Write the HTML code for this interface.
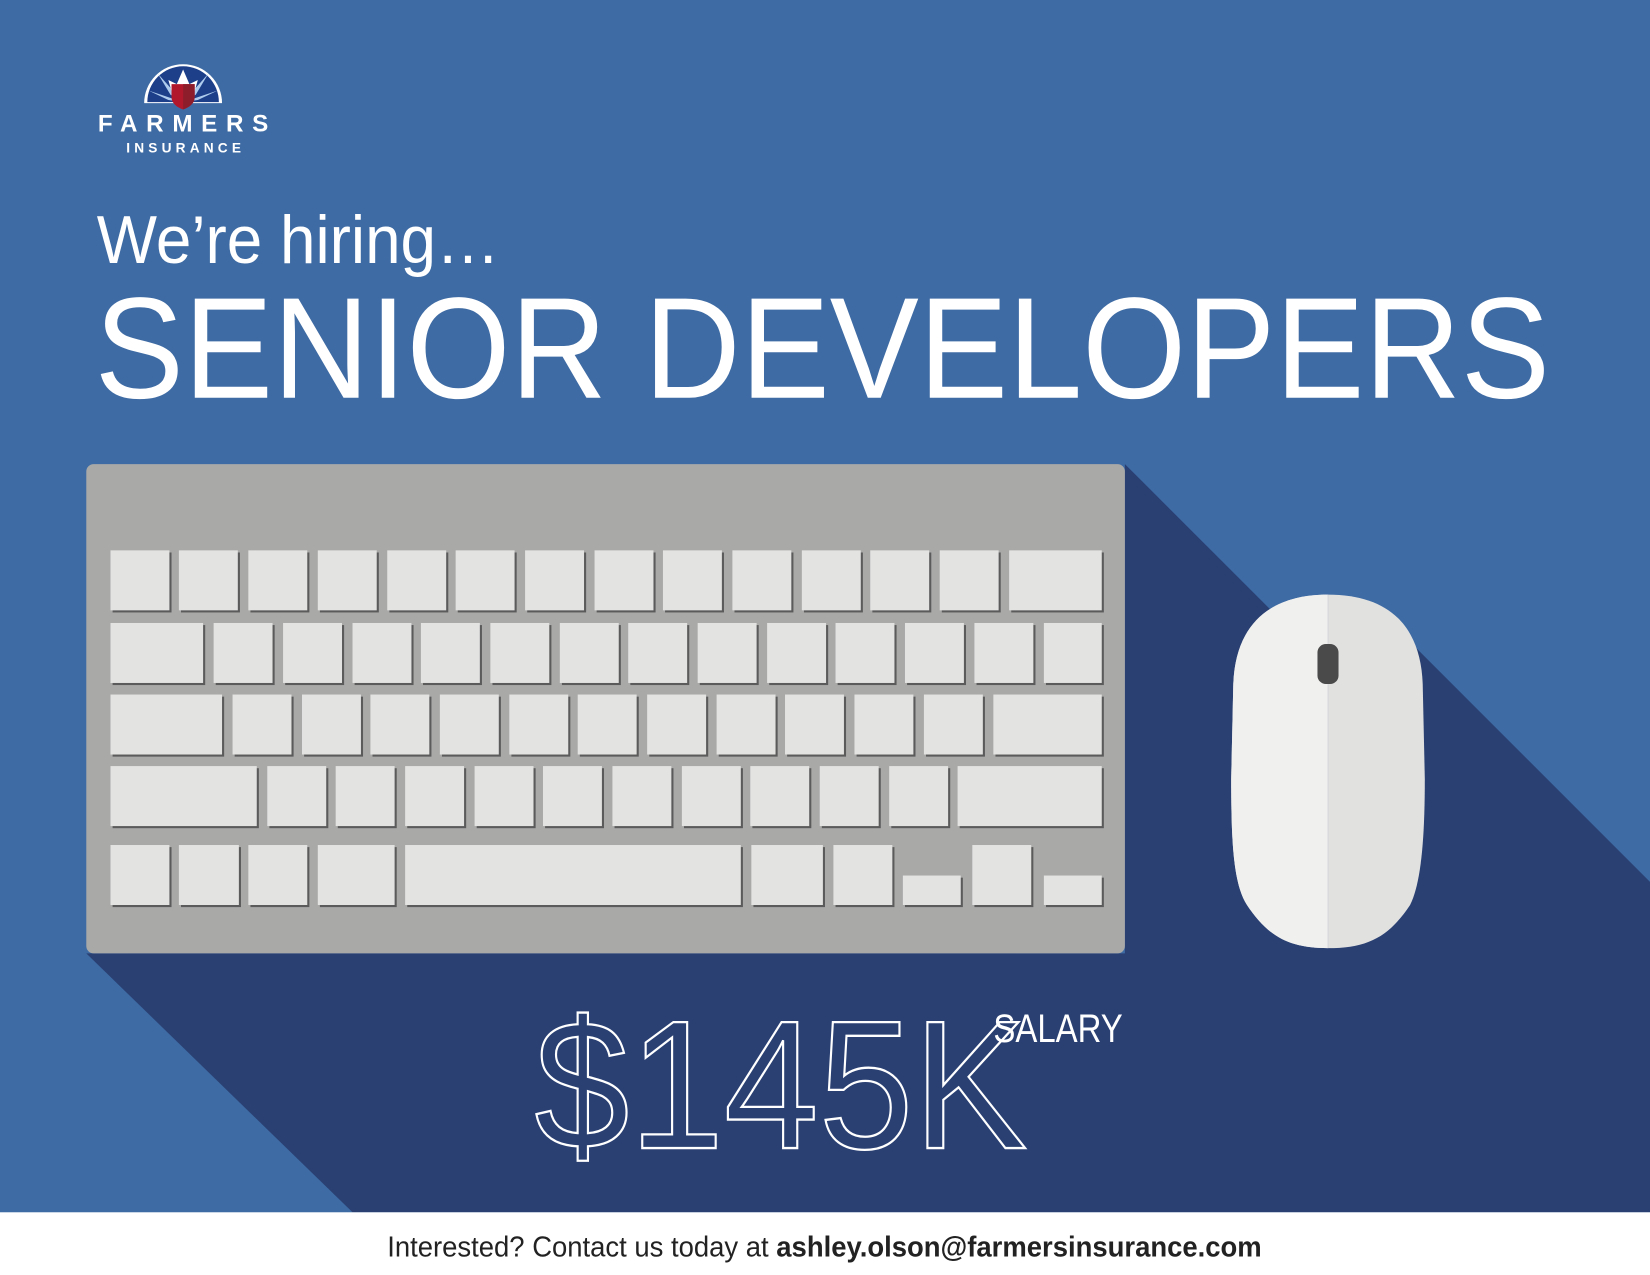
<!DOCTYPE html>
<html><head><meta charset="utf-8"><style>html,body{margin:0;padding:0;width:1650px;height:1275px;overflow:hidden;background:#3e6ba4}svg{display:block}</style></head>
<body>
<svg width="1650" height="1275" viewBox="0 0 1568 1211.6" preserveAspectRatio="none" xmlns="http://www.w3.org/2000/svg" font-family="Liberation Sans, sans-serif">
<rect width="1568" height="1212" fill="#3e6ba4"/>
<polygon points="1069,441 1215,587 1320,590 1568,838 1568,1152 335,1152 82,906 1069,906" fill="#2a4073"/>
<rect x="0" y="1152" width="1568" height="60" fill="#fff"/>
<!-- logo -->
<path d="M137,98 A37,37 0 0 1 211,98 Z" fill="#fff"/>
<path d="M140,97 A34,34 0 0 1 208,97 Z" fill="#1d3f8a"/>
<g fill="#aecbed">
<polygon points="174,97 150,70 162,90"/><polygon points="174,97 198,70 186,90"/>
<polygon points="174,97 141,86 160,95"/><polygon points="174,97 207,86 188,95"/>
<polygon points="174,97 162,64 170,86"/><polygon points="174,97 186,64 178,86"/>
</g>
<polygon points="174,66 168,80 160,76 164,90 184,90 188,76 180,80" fill="#fff"/>
<path d="M163,80 L185,80 L185,92 Q185,100 174,104 Q163,100 163,92 Z" fill="#b2182b"/>
<path d="M174,80 L185,80 L185,92 Q185,100 174,104 Z" fill="#8e1d2c"/>
<text x="93" y="125" font-size="23" font-weight="bold" fill="#fff" textLength="162" lengthAdjust="spacing">FARMERS</text>
<text x="120" y="145" font-size="13" font-weight="bold" fill="#fff" textLength="109" lengthAdjust="spacing">INSURANCE</text>
<!-- headings -->
<text x="92" y="250" font-size="64" fill="#fff" textLength="383" lengthAdjust="spacingAndGlyphs">We’re hiring…</text>
<text x="90" y="378" font-size="137" fill="#fff" textLength="1383" lengthAdjust="spacingAndGlyphs">SENIOR DEVELOPERS</text>
<!-- keyboard -->
<rect x="82" y="441" width="987" height="465" rx="7" fill="#a9a9a8"/>
<g fill="#5b5b5b" transform="translate(2,2)">
<rect x="105" y="523" width="56" height="57"/><rect x="170" y="523" width="56" height="57"/><rect x="236" y="523" width="56" height="57"/><rect x="302" y="523" width="56" height="57"/><rect x="368" y="523" width="56" height="57"/><rect x="433" y="523" width="56" height="57"/><rect x="499" y="523" width="56" height="57"/><rect x="565" y="523" width="56" height="57"/><rect x="630" y="523" width="56" height="57"/><rect x="696" y="523" width="56" height="57"/><rect x="762" y="523" width="56" height="57"/><rect x="827" y="523" width="56" height="57"/><rect x="893" y="523" width="56" height="57"/><rect x="959" y="523" width="88" height="57"/>
<rect x="105" y="592" width="88" height="57"/><rect x="203" y="592" width="56" height="57"/><rect x="269" y="592" width="56" height="57"/><rect x="335" y="592" width="56" height="57"/><rect x="400" y="592" width="56" height="57"/><rect x="466" y="592" width="56" height="57"/><rect x="532" y="592" width="56" height="57"/><rect x="597" y="592" width="56" height="57"/><rect x="663" y="592" width="56" height="57"/><rect x="729" y="592" width="56" height="57"/><rect x="794" y="592" width="56" height="57"/><rect x="860" y="592" width="56" height="57"/><rect x="926" y="592" width="56" height="57"/><rect x="992" y="592" width="55" height="57"/>
<rect x="105" y="660" width="106" height="57"/><rect x="221" y="660" width="56" height="57"/><rect x="287" y="660" width="56" height="57"/><rect x="352" y="660" width="56" height="57"/><rect x="418" y="660" width="56" height="57"/><rect x="484" y="660" width="56" height="57"/><rect x="549" y="660" width="56" height="57"/><rect x="615" y="660" width="56" height="57"/><rect x="681" y="660" width="56" height="57"/><rect x="746" y="660" width="56" height="57"/><rect x="812" y="660" width="56" height="57"/><rect x="878" y="660" width="56" height="57"/><rect x="944" y="660" width="103" height="57"/>
<rect x="105" y="728" width="139" height="57"/><rect x="254" y="728" width="56" height="57"/><rect x="319" y="728" width="56" height="57"/><rect x="385" y="728" width="56" height="57"/><rect x="451" y="728" width="56" height="57"/><rect x="516" y="728" width="56" height="57"/><rect x="582" y="728" width="56" height="57"/><rect x="648" y="728" width="56" height="57"/><rect x="713" y="728" width="56" height="57"/><rect x="779" y="728" width="56" height="57"/><rect x="845" y="728" width="56" height="57"/><rect x="910" y="728" width="137" height="57"/>
<rect x="105" y="803" width="56" height="57"/><rect x="170" y="803" width="57" height="57"/><rect x="236" y="803" width="56" height="57"/><rect x="302" y="803" width="73" height="57"/><rect x="385" y="803" width="319" height="57"/><rect x="714" y="803" width="68" height="57"/><rect x="792" y="803" width="56" height="57"/><rect x="858" y="832" width="55" height="28"/><rect x="924" y="803" width="56" height="57"/><rect x="992" y="832" width="55" height="28"/>
</g>
<g fill="#e3e3e2">
<rect x="105" y="523" width="56" height="57"/><rect x="170" y="523" width="56" height="57"/><rect x="236" y="523" width="56" height="57"/><rect x="302" y="523" width="56" height="57"/><rect x="368" y="523" width="56" height="57"/><rect x="433" y="523" width="56" height="57"/><rect x="499" y="523" width="56" height="57"/><rect x="565" y="523" width="56" height="57"/><rect x="630" y="523" width="56" height="57"/><rect x="696" y="523" width="56" height="57"/><rect x="762" y="523" width="56" height="57"/><rect x="827" y="523" width="56" height="57"/><rect x="893" y="523" width="56" height="57"/><rect x="959" y="523" width="88" height="57"/>
<rect x="105" y="592" width="88" height="57"/><rect x="203" y="592" width="56" height="57"/><rect x="269" y="592" width="56" height="57"/><rect x="335" y="592" width="56" height="57"/><rect x="400" y="592" width="56" height="57"/><rect x="466" y="592" width="56" height="57"/><rect x="532" y="592" width="56" height="57"/><rect x="597" y="592" width="56" height="57"/><rect x="663" y="592" width="56" height="57"/><rect x="729" y="592" width="56" height="57"/><rect x="794" y="592" width="56" height="57"/><rect x="860" y="592" width="56" height="57"/><rect x="926" y="592" width="56" height="57"/><rect x="992" y="592" width="55" height="57"/>
<rect x="105" y="660" width="106" height="57"/><rect x="221" y="660" width="56" height="57"/><rect x="287" y="660" width="56" height="57"/><rect x="352" y="660" width="56" height="57"/><rect x="418" y="660" width="56" height="57"/><rect x="484" y="660" width="56" height="57"/><rect x="549" y="660" width="56" height="57"/><rect x="615" y="660" width="56" height="57"/><rect x="681" y="660" width="56" height="57"/><rect x="746" y="660" width="56" height="57"/><rect x="812" y="660" width="56" height="57"/><rect x="878" y="660" width="56" height="57"/><rect x="944" y="660" width="103" height="57"/>
<rect x="105" y="728" width="139" height="57"/><rect x="254" y="728" width="56" height="57"/><rect x="319" y="728" width="56" height="57"/><rect x="385" y="728" width="56" height="57"/><rect x="451" y="728" width="56" height="57"/><rect x="516" y="728" width="56" height="57"/><rect x="582" y="728" width="56" height="57"/><rect x="648" y="728" width="56" height="57"/><rect x="713" y="728" width="56" height="57"/><rect x="779" y="728" width="56" height="57"/><rect x="845" y="728" width="56" height="57"/><rect x="910" y="728" width="137" height="57"/>
<rect x="105" y="803" width="56" height="57"/><rect x="170" y="803" width="57" height="57"/><rect x="236" y="803" width="56" height="57"/><rect x="302" y="803" width="73" height="57"/><rect x="385" y="803" width="319" height="57"/><rect x="714" y="803" width="68" height="57"/><rect x="792" y="803" width="56" height="57"/><rect x="858" y="832" width="55" height="28"/><rect x="924" y="803" width="56" height="57"/><rect x="992" y="832" width="55" height="28"/>
</g>
<!-- mouse -->
<path d="M1262,565 C1320,565 1350,595 1352,650 L1354,740 C1354,800 1350,840 1340,860 C1320,890 1300,901 1262,901 C1225,901 1205,890 1185,860 C1172,840 1170,800 1170,740 L1172,650 C1174,595 1205,565 1262,565Z" fill="#e1e1e0"/>
<path d="M1262,565 L1262,901 C1225,901 1205,890 1185,860 C1172,840 1170,800 1170,740 L1172,650 C1174,595 1205,565 1262,565Z" fill="#f0f0ef"/>
<line x1="1262" y1="565" x2="1262" y2="901" stroke="#c9cbd3" stroke-width="0.6"/>
<rect x="1252" y="612" width="20" height="38" rx="8" fill="#4a4a4a"/>
<!-- salary -->
<text x="508" y="1091" font-size="174" fill="none" stroke="#fff" stroke-width="2.2" textLength="468" lengthAdjust="spacingAndGlyphs">$145K</text>
<text x="944" y="990" font-size="38" fill="#fff" textLength="123" lengthAdjust="spacingAndGlyphs">SALARY</text>
<!-- footer -->
<text x="368" y="1194" font-size="27" fill="#222" textLength="831" lengthAdjust="spacingAndGlyphs">Interested? Contact us today at <tspan font-weight="bold">ashley.olson@farmersinsurance.com</tspan></text>
</svg>
</body></html>
